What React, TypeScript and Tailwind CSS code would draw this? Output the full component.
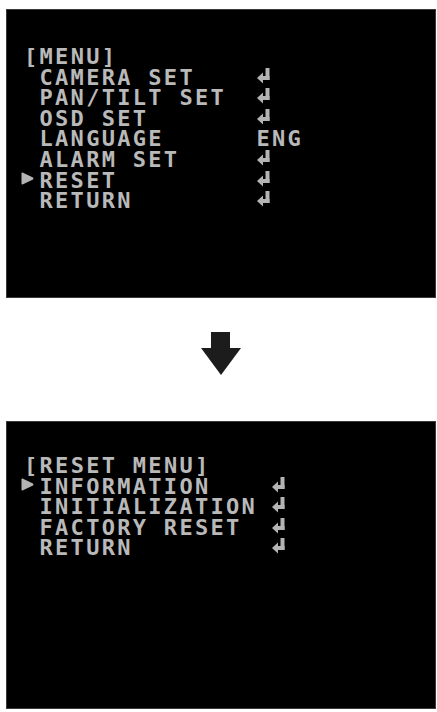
import React from "react";

type Row = { label: string; value?: string; selected?: boolean };

const topRows: Row[] = [
  { label: "CAMERA SET" },
  { label: "PAN/TILT SET" },
  { label: "OSD SET" },
  { label: "LANGUAGE", value: "ENG" },
  { label: "ALARM SET" },
  { label: "RESET", selected: true },
  { label: "RETURN" },
];

const bottomRows: Row[] = [
  { label: "INFORMATION", selected: true },
  { label: "INITIALIZATION" },
  { label: "FACTORY RESET" },
  { label: "RETURN" },
];

const EnterIcon = () => (
  <svg width="14" height="16" viewBox="0 0 14 16">
    <rect x="8.5" y="0" width="4" height="12" fill="#b4b4b4" />
    <rect x="4" y="8" width="8.5" height="4" fill="#b4b4b4" />
    <polygon points="0,10 6,4.5 6,15.5" fill="#b4b4b4" />
  </svg>
);

const Marker = () => (
  <svg width="13" height="13" viewBox="0 0 13 13" className="-ml-[3px] mt-[1px]">
    <path
      d="M1.5 0.5 L12 5.4 Q13 6.5 12 7.6 L1.5 12.5 Q0.5 12.8 0.5 11.5 L0.5 1.5 Q0.5 0.2 1.5 0.5 Z"
      fill="#b4b4b4"
    />
  </svg>
);

const OsdPanel = ({
  title,
  rows,
  labelWidth,
  padTop,
}: {
  title: string;
  rows: Row[];
  labelWidth: string;
  padTop: string;
}) => {
  return (
    <div
      className={`h-full w-full bg-black border border-[#3a3a3a] pl-[17px] ${padTop} font-['DejaVu_Sans_Mono',monospace] text-[22px] font-bold leading-[20.6px] tracking-[2.3px] text-[#b9b9b9]`}
    >
      <div className="whitespace-pre">{title}</div>
      {rows.map((row) => (
        <div key={row.label} className="flex items-start h-[20.6px]">
          <div className="w-[15.5px] flex">{row.selected && <Marker />}</div>
          <div className={`${labelWidth} whitespace-pre`}>{row.label}</div>
          <div className="flex">
            {row.value ? row.value : <EnterIcon />}
          </div>
        </div>
      ))}
    </div>
  );
};

const App = () => {
  return (
    <div className="w-[437px] h-[712px] bg-white flex flex-col pl-[6px]">
      <div className="mt-[9px] h-[289px] w-[430px]">
        <OsdPanel
          title="[MENU]"
          rows={topRows}
          labelWidth="w-[217px]"
          padTop="pt-[37px]"
        />
      </div>
      <div className="mt-[34px] h-[43px] flex justify-center w-[430px]">
        <svg width="40" height="43" viewBox="0 0 40 43">
          <rect x="10" y="0" width="19" height="17" fill="#1c1c1c" />
          <polygon points="0,16 40,16 20,43" fill="#1c1c1c" />
        </svg>
      </div>
      <div className="mt-[46px] h-[288px] w-[430px]">
        <OsdPanel
          title="[RESET MENU]"
          rows={bottomRows}
          labelWidth="w-[232.5px]"
          padTop="pt-[34px]"
        />
      </div>
    </div>
  );
};

export default App;
